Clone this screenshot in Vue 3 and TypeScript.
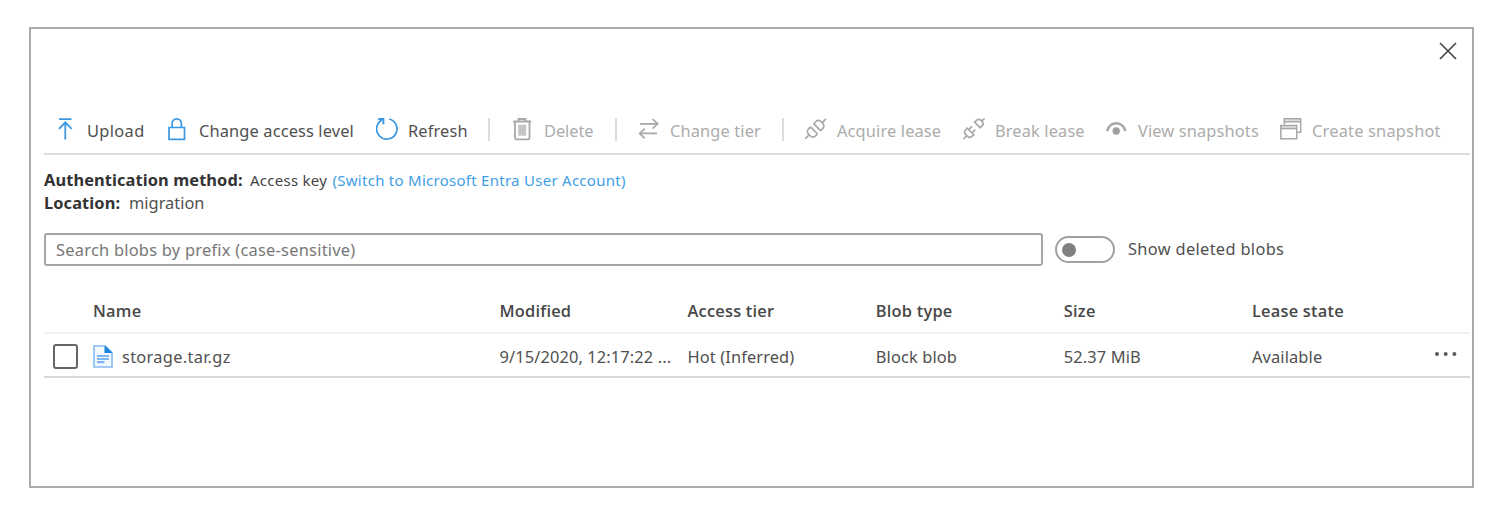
<script setup lang="ts">
interface Command {
  id: string
  label?: string
  tone?: 'active' | 'muted'
}

const commands: Command[] = [
  { id: 'upload', label: 'Upload', tone: 'active' },
  { id: 'lock', label: 'Change access level', tone: 'active' },
  { id: 'refresh', label: 'Refresh', tone: 'active' },
  { id: 'sep1' },
  { id: 'delete', label: 'Delete', tone: 'muted' },
  { id: 'sep2' },
  { id: 'tier', label: 'Change tier', tone: 'muted' },
  { id: 'sep3' },
  { id: 'acquire', label: 'Acquire lease', tone: 'muted' },
  { id: 'break', label: 'Break lease', tone: 'muted' },
  { id: 'view', label: 'View snapshots', tone: 'muted' },
  { id: 'create', label: 'Create snapshot', tone: 'muted' },
]

const columns: string[] = ['Name', 'Modified', 'Access tier', 'Blob type', 'Size', 'Lease state']
const cells: string[] = ['9/15/2020, 12:17:22 ...', 'Hot (Inferred)', 'Block blob', '52.37 MiB', 'Available']
</script>

<template>
  <main class="panel">
    <header class="top">
      <svg class="close" viewBox="0 0 18 18"><path d="M1 1l16 16M17 1L1 17" /></svg>
    </header>

    <nav class="toolbar">
      <div v-for="c in commands" :key="c.id" :class="['cmd', c.id, c.tone]">
        <i v-if="!c.label" class="sep"></i>
        <template v-else>
          <svg class="icon" viewBox="0 0 24 24">
            <g v-if="c.id === 'upload'"><path d="M4 1.2h12.5M10.3 21.5V4.5M4 10.8l6.3-6.5 6.3 6.5" stroke-width="1.8" /></g>
            <g v-else-if="c.id === 'lock'"><path d="M2 9.5h15.5v11.8H2zM5.1 9.5V5.5a4.65 4.65 0 0 1 9.3 0v4" stroke-width="1.7" /></g>
            <g v-else-if="c.id === 'refresh'">
              <path d="M13.2 1A10.2 10.2 0 1 1 6 1.9" stroke-width="1.7" /><path d="M2.2 1.1h5.2v5.2" stroke-width="2" />
            </g>
            <g v-else-if="c.id === 'delete'">
              <path d="M1.2 3.5h18M6.5 3.3V1h7v2.3M3 3.5V20a1.3 1.3 0 0 0 1.3 1.3h11.9a1.3 1.3 0 0 0 1.3-1.3V3.5" stroke-width="1.8" />
              <path d="M6.2 6.7h8v11h-8z" fill="#c4c4c4" stroke="none" />
            </g>
            <g v-else-if="c.id === 'tier'">
              <path d="M2 5.8h18M14.5 1l5.2 4.8-5.2 4.8M19 15.4H1.5M6.8 10.6l-5.2 4.8 5.2 5" stroke-width="1.7" />
            </g>
            <g v-else-if="c.id === 'acquire'">
              <path stroke-width="1.7" d="M0 21l4-4M17 4.8L21 .8M8.7 5.7l7.1 7.1M5.5 8.9l7.1 7.1M8.7 5.7l2.2-2.2a3.5 3.5 0 0 1 5 0l2 2a3.5 3.5 0 0 1-.2 5l-1.9 2.3M5.5 8.9L3.4 11a3.5 3.5 0 0 0 0 5l2 2a3.5 3.5 0 0 0 5 0l2.2-2" />
            </g>
            <g v-else-if="c.id === 'break'">
              <path stroke-width="1.7" d="M.5 21l3-3M18.3 3.7L21.5.5M11 3.5l6.8 6.8M11.7 4.2l1.8-1.8a3.2 3.2 0 0 1 4.5 0l1 1a3.2 3.2 0 0 1 0 4.5l-2 1.8M3.5 9.5l8 8M4.3 10.3l-1.7 1.7a3.2 3.2 0 0 0 0 4.5l1.8 1.8a3.2 3.2 0 0 0 4.5 0l1.8-1.7M5.7 11.7L9 8.4M9 15l3.3-3.3" />
            </g>
            <g v-else-if="c.id === 'view'">
              <path d="M1 13C2.8 7.6 6 5.2 10.3 5.2s7.5 2.4 9.3 7.8" stroke-width="2.4" />
              <circle cx="10.2" cy="13" r="3.7" fill="#a0a0a0" stroke="none" />
            </g>
            <g v-else>
              <path d="M4.3 1h16.2v3H4.3zM1 8h15.5v2.6H1z" fill="#dedede" stroke="none" />
              <path d="M4.3 6.5V.8h16.4v13.4h-4" /><path d="M4.3 3.8h16.4" />
              <path d="M0.8 7.5h16v13.2h-16z" /><path d="M.5 10.6h16.2" />
            </g>
          </svg>
          <span>{{ c.label }}</span>
        </template>
      </div>
    </nav>

    <section class="meta">
      <p class="auth"><b>Authentication method:</b><span class="key">Access key</span><a>(Switch to Microsoft Entra User Account)</a></p>
      <p class="location"><b>Location:</b><span>migration</span></p>
    </section>

    <section class="filters">
      <div class="search"><span>Search blobs by prefix (case-sensitive)</span></div>
      <div class="toggle"><i></i></div>
      <span class="deleted">Show deleted blobs</span>
    </section>

    <section class="table">
      <div class="row head">
        <span></span>
        <span v-for="c in columns" :key="c">{{ c }}</span>
      </div>
      <div class="row body">
        <i class="check"></i>
        <span class="file">
          <svg class="doc" viewBox="0 0 20 23">
            <path d="M1 1h11.5L19 7.5V22H1z" fill="#f3f9ff" stroke="#83bbf1" stroke-width="1.6" />
            <path d="M11.5.5L19.5 8h-8z" fill="#1783dc" />
            <path d="M4 11h12M4 14h12M4 17.2h7.5" stroke="#7db6f2" stroke-width="2.2" />
          </svg>
          <span class="filename">storage.tar.gz</span>
        </span>
        <span v-for="c in cells" :key="c">{{ c }}</span>
        <svg class="more" viewBox="0 0 24 6"><circle cx="3" cy="3" r="2" /><circle cx="11.7" cy="3" r="2" /><circle cx="20.4" cy="3" r="2" /></svg>
      </div>
    </section>
  </main>
</template>

<style>
body { margin: 0; background: #fff; }
</style>

<style scoped>
.panel {
  box-sizing: border-box;
  width: 1445px;
  height: 461px;
  margin: 27px 0 0 29px;
  padding: 0 2px 0 13px;
  border: 2px solid #aaa;
  font: 16.4px/22px "Noto Sans", "Open Sans", sans-serif;
  color: #505050;
  white-space: nowrap;
  display: flex;
  flex-direction: column;
}
.top { display: flex; justify-content: flex-end; height: 79px; flex: none; }
.close { width: 18px; height: 18px; margin: 13px 13px 0 0; fill: none; stroke: #484848; stroke-width: 1.7; }

.toolbar {
  display: grid;
  grid-template-columns: 112px 209px 112px 24px 103px 23px 144px 23px 158px 143px 174px 190px;
  padding-left: 11px;
  height: 45px;
  border-bottom: 2px solid #dedede;
  flex: none;
}
.cmd { display: flex; align-items: flex-start; padding-top: 10px; letter-spacing: 0.13px; }
.upload { letter-spacing: 0.35px; }
.delete { letter-spacing: -0.05px; }
.create { letter-spacing: 0.2px; }
.cmd span { line-height: 24px; margin-top: 1px; }
.icon { width: 24px; height: 24px; margin-right: 8px; flex: none; fill: none; stroke-width: 1.5; }
.active .icon { stroke: #3b98e2; }
.muted { color: #acacac; }
.muted .icon { stroke: #a8a8a8; }
.sep { width: 2px; height: 23px; background: #dcdcdc; }

.meta { margin-top: 13px; height: 65px; flex: none; }
.meta p { display: flex; margin: 0; height: 23px; line-height: 24px; }
.meta b { font-weight: 700; color: #333; letter-spacing: 0.1px; }
.auth b { width: 206px; }
.auth .key { width: 82.5px; font-size: 15px; color: #444; letter-spacing: 0.25px; }
.auth a { font-size: 15px; color: #419ee4; letter-spacing: 0.27px; }
.location b { width: 85px; }

.filters { display: flex; height: 33px; flex: none; }
.search {
  box-sizing: border-box;
  width: 999px;
  height: 33px;
  border: 2px solid #a6a6a6;
  border-radius: 3px;
  padding: 4px 10px;
  color: #777;
  letter-spacing: 0.25px;
}
.toggle {
  box-sizing: border-box;
  width: 60px;
  height: 27px;
  margin: 3px 13px 0 12px;
  border: 2px solid #a0a0a0;
  border-radius: 14px;
  padding: 4.5px 5px;
}
.toggle i { display: block; width: 14px; height: 14px; border-radius: 50%; background: #808080; }
.deleted { line-height: 31px; letter-spacing: 0.33px; }

.table { margin-top: 23px; }
.row {
  display: grid;
  grid-template-columns: 49px 406.5px 188px 188.3px 188px 188.2px 174px 1fr;
  box-sizing: border-box;
}
.head { height: 45px; border-bottom: 2px solid #f1f1f1; line-height: 44px; font-family: "Open Sans", "Noto Sans", sans-serif; font-weight: 600; color: #484848; letter-spacing: 0.22px; }
.body { height: 44px; border-bottom: 2px solid #d8d8d8; line-height: 45px; letter-spacing: 0.12px; }
.check { box-sizing: border-box; width: 25px; height: 25px; margin: 10px 0 0 9px; border: 2px solid #666; border-radius: 3px; }
.file { display: flex; }
.filename { letter-spacing: 0.3px; }
.doc { width: 20px; height: 23px; margin: 11px 9px 0 0; fill: none; }
.more { width: 24px; height: 6px; margin: 17px 0 0 8px; fill: #5c5c5c; }
</style>
